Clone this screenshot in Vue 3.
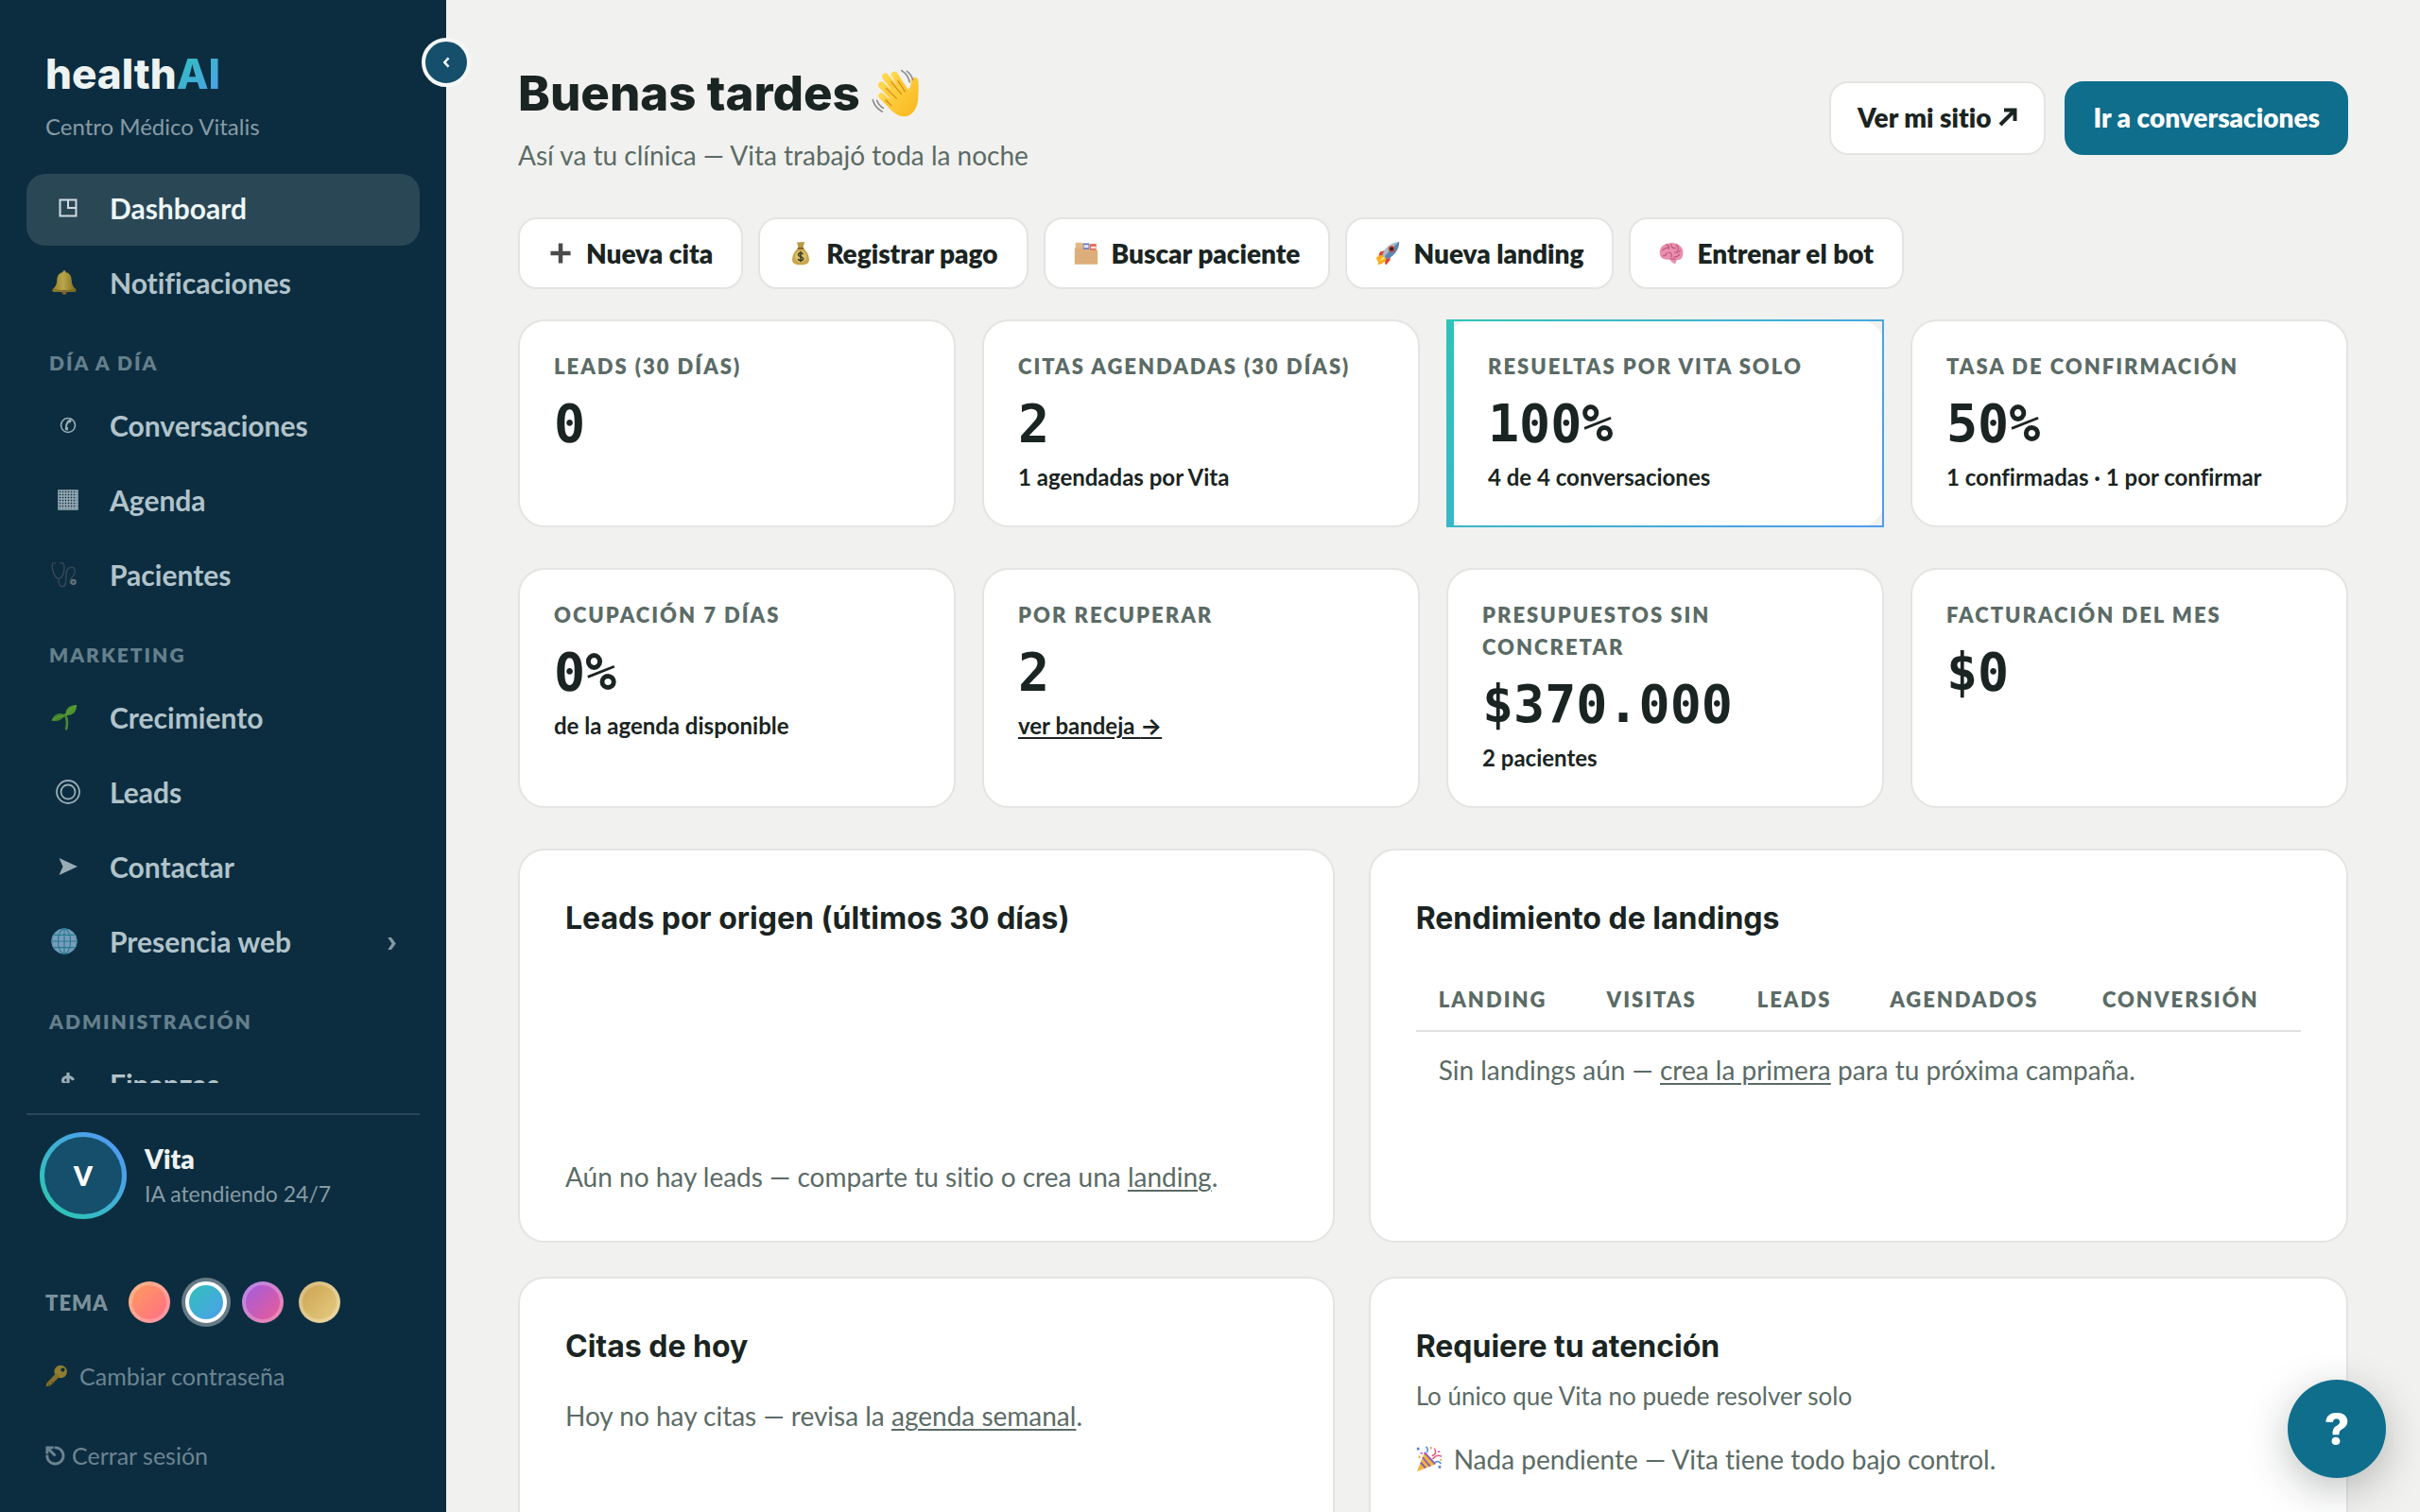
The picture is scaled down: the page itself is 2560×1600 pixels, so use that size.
<template>
  <div class="app">
    <aside class="sidebar">
      <button class="collapse" aria-label="Contraer menú">
        <svg viewBox="0 0 12 16"><path d="M9 2.500 4 8l5 5.500" /></svg>
      </button>

      <div class="brand">
        <div class="logo">health<span>AI</span></div>
        <div class="clinic">Centro Médico Vitalis</div>
      </div>

      <nav class="nav">
        <template v-for="group in navGroups" :key="group.title">
          <div v-if="group.title" class="nav-title">{{ group.title }}</div>
          <div class="nav-list">
            <a
              v-for="item in group.items"
              :key="item.label"
              href="#"
              class="nav-item"
              :class="{ active: item.label === current }"
              @click.prevent="current = item.label"
            >
              <span class="nav-icon" :class="{ emoji: item.emoji }">
                <svg viewBox="0 0 32 32" v-html="icons[item.icon]"></svg>
              </span>
              <span class="nav-label">{{ item.label }}</span>
              <svg v-if="item.more" class="chevron" viewBox="0 0 10 14"><path d="M1 1h3.500l4.500 6-4.500 6H1l4-6z" /></svg>
            </a>
          </div>
        </template>
      </nav>

      <div class="side-footer">
        <div class="agent">
          <div class="avatar">V</div>
          <div>
            <div class="agent-name">Vita</div>
            <div class="agent-state">IA atendiendo 24/7</div>
          </div>
        </div>
        <div class="themes">
          <span class="themes-label">TEMA</span>
          <button
            v-for="t in themes"
            :key="t"
            class="swatch"
            :class="[t, { selected: t === theme }]"
            :aria-label="'Tema ' + t"
            @click="theme = t"
          ></button>
        </div>
        <a href="#" class="side-link password">
          <svg class="key" viewBox="0 0 32 32" v-html="icons.key"></svg>Cambiar contraseña
        </a>
        <a href="#" class="side-link logout">
          <svg class="exit" viewBox="0 0 22 22">
            <path d="M10 2a9 9 0 1 1-8 8M2 9V2h7M2.500 2.500 11 11" />
          </svg>Cerrar sesión
        </a>
      </div>
    </aside>

    <main class="main">
      <header class="header">
        <div>
          <h1>Buenas tardes <svg class="wave" viewBox="0 0 32 32" v-html="icons.wave"></svg></h1>
          <p class="lead">Así va tu clínica — Vita trabajó toda la noche</p>
        </div>
        <div class="header-actions">
          <a href="#" class="btn">Ver mi sitio
            <svg class="arrow-ne" viewBox="0 0 20 20"><path d="M2 18 17 3M6 2.500h11.500V14" /></svg>
          </a>
          <a href="#" class="btn primary">Ir a conversaciones</a>
        </div>
      </header>

      <div class="quick">
        <button v-for="q in quickActions" :key="q.label" class="quick-btn">
          <svg viewBox="0 0 32 32" v-html="icons[q.icon]"></svg>{{ q.label }}
        </button>
      </div>

      <section v-for="(row, i) in kpis" :key="i" class="kpis">
        <div v-for="k in row" :key="k.label" class="kpi" :class="{ highlight: k.highlight }">
          <div class="kpi-label">{{ k.label }}</div>
          <div class="kpi-value">{{ k.value }}</div>
          <div v-if="k.link" class="kpi-sub"><a href="#">{{ k.link }} <span class="arrow">→</span></a></div>
          <div v-else-if="k.sub" class="kpi-sub">{{ k.sub }}</div>
        </div>
      </section>

      <section class="panels">
        <div class="panel">
          <h2>Leads por origen (últimos 30 días)</h2>
          <div class="chart"></div>
          <p class="empty">Aún no hay leads — comparte tu sitio o crea una <a href="#">landing</a>.</p>
        </div>

        <div class="panel">
          <h2>Rendimiento de landings</h2>
          <table class="landings">
            <thead>
              <tr>
                <th v-for="c in columns" :key="c" :class="c.toLowerCase()">{{ c }}</th>
              </tr>
            </thead>
            <tbody>
              <tr>
                <td colspan="5">Sin landings aún — <a href="#">crea la primera</a> para tu próxima campaña.</td>
              </tr>
            </tbody>
          </table>
        </div>

        <div class="panel low">
          <h2>Citas de hoy</h2>
          <p class="empty today">Hoy no hay citas — revisa la <a href="#">agenda semanal</a>.</p>
        </div>

        <div class="panel low">
          <h2>Requiere tu atención</h2>
          <p class="hint">Lo único que Vita no puede resolver solo</p>
          <p class="empty pending">
            <svg viewBox="0 0 32 32" v-html="icons.party"></svg>Nada pendiente — Vita tiene todo bajo control.
          </p>
        </div>
      </section>
    </main>

    <button class="help" aria-label="Ayuda">?</button>
  </div>
</template>

<script setup>
import { ref } from 'vue'

const current = ref('Dashboard')
const theme = ref('oceano')
const themes = ['coral', 'oceano', 'violeta', 'arena']

const navGroups = [
  {
    title: '',
    items: [
      { label: 'Dashboard', icon: 'dashboard' },
      { label: 'Notificaciones', icon: 'bell', emoji: true }
    ]
  },
  {
    title: 'DÍA A DÍA',
    items: [
      { label: 'Conversaciones', icon: 'phone' },
      { label: 'Agenda', icon: 'grid' },
      { label: 'Pacientes', icon: 'stethoscope', emoji: true }
    ]
  },
  {
    title: 'MARKETING',
    items: [
      { label: 'Crecimiento', icon: 'seedling', emoji: true },
      { label: 'Leads', icon: 'target' },
      { label: 'Contactar', icon: 'send' },
      { label: 'Presencia web', icon: 'globe', emoji: true, more: true }
    ]
  },
  {
    title: 'ADMINISTRACIÓN',
    items: [{ label: 'Finanzas', icon: 'dollar' }]
  }
]

const quickActions = [
  { label: 'Nueva cita', icon: 'plus' },
  { label: 'Registrar pago', icon: 'money' },
  { label: 'Buscar paciente', icon: 'folders' },
  { label: 'Nueva landing', icon: 'rocket' },
  { label: 'Entrenar el bot', icon: 'brain' }
]

const kpis = [
  [
    { label: 'LEADS (30 DÍAS)', value: '0' },
    { label: 'CITAS AGENDADAS (30 DÍAS)', value: '2', sub: '1 agendadas por Vita' },
    { label: 'RESUELTAS POR VITA SOLO', value: '100%', sub: '4 de 4 conversaciones', highlight: true },
    { label: 'TASA DE CONFIRMACIÓN', value: '50%', sub: '1 confirmadas · 1 por confirmar' }
  ],
  [
    { label: 'OCUPACIÓN 7 DÍAS', value: '0%', sub: 'de la agenda disponible' },
    { label: 'POR RECUPERAR', value: '2', link: 'ver bandeja' },
    { label: 'PRESUPUESTOS SIN CONCRETAR', value: '$370.000', sub: '2 pacientes' },
    { label: 'FACTURACIÓN DEL MES', value: '$0' }
  ]
]

const columns = ['LANDING', 'VISITAS', 'LEADS', 'AGENDADOS', 'CONVERSIÓN']

const icons = {
  dashboard: '<path d="M7.500 7.500h17v17h-17zM16 7.500V16h8.500" fill="none" stroke="currentColor" stroke-width="2"/>',
  phone: '<circle cx="16" cy="16" r="7.500" fill="none" stroke="currentColor" stroke-width="1.600"/><path d="M18.500 9.500c-3.500.5-6 5-5.500 11.500l2.800.6.4-3.200-1.300-.7c.2-1.800.9-3.300 2-4.500l1.500.4 1.600-2.600z" fill="currentColor"/>',
  grid: '<path d="M6 6h20v20H6zM9 6v20M12 6v20M15 6v20M18 6v20M21 6v20M24 6v20M6 9h20M6 12h20M6 15h20M6 18h20M6 21h20M6 24h20" fill="none" stroke="currentColor" stroke-width="1.500"/>',
  target: '<g fill="none" stroke="currentColor" stroke-width="1.800"><circle cx="16" cy="16" r="12"/><circle cx="16" cy="16" r="7.500"/></g>',
  send: '<path d="M6.500 7 26 16 6.500 25l4-9z" fill="currentColor"/>',
  dollar: '<path d="M16 4v23M21.500 12c-1-2.600-3-3.500-5.500-3.500-3 0-5.500 1.400-5.500 3.900 0 5 11.500 2.300 11.500 7.400 0 2.500-2.300 3.900-5.900 3.900-3 0-5.300-1-6-3.500" fill="none" stroke="currentColor" stroke-width="3.200"/>',
  bell: '<defs><linearGradient id="gb" x2="1"><stop stop-color="#c99a1c"/><stop offset=".45" stop-color="#f3d04f"/><stop offset="1" stop-color="#a87f10"/></linearGradient></defs><circle cx="16" cy="3" r="1.800" fill="#cdb668"/><path d="M16 3.500c5.500 0 8.500 3.500 8.800 9 .3 6 1.700 8.500 5.200 11.500 1 1.500.4 3-1 3.200H3c-1.400-.2-2-1.700-1-3.200 3.500-3 4.900-5.500 5.200-11.500.3-5.500 3.300-9 8.800-9z" fill="url(#gb)"/><path d="M3 24.500c8 2 18 2 26 0" fill="none" stroke="#8d6a10" stroke-width="1"/><circle cx="16" cy="28" r="2.800" fill="#a8702e"/>',
  stethoscope: '<g fill="none" stroke="#46525c" stroke-width="1.500" stroke-linecap="round"><path d="M5 2C2 1.500 1 3 1.500 7c.5 6 3 13 7.500 14 5-1 7-8 7-14 0-4-1.500-5.500-4.500-5"/><path d="M9 21c0 6 1 9.500 5 9.500 6 0 3-13 5-19 1.500-5 9-6 10-1 1 4-1 5-3 8-2 2-4 5-3 8"/></g><circle cx="27" cy="25" r="3.500" fill="#8b9398"/><circle cx="27" cy="25" r="1.800" fill="#4c5258"/>',
  seedling: '<path d="M17 13c3 5 3 10 1.500 17" fill="none" stroke="#5da52b" stroke-width="3" stroke-linecap="round"/><path d="M17.500 14C17 5 22 1.500 31 1c0 8-4 12.500-13.500 13z" fill="#64b52a"/><path d="M17 14c-4-4.500-13-3-16.500 6 6.500 1.500 11 .5 16.500-6z" fill="#55a325"/><path d="M18 13.500c3-4.500 6-8 12-11.500M16 14.500c-5 .3-10 2-14.500 5" stroke="#86cc4a" fill="none"/>',
  globe: '<circle cx="16" cy="16" r="15.500" fill="#9cc2e6"/><circle cx="16" cy="16" r="15" fill="none" stroke="#6db2cd"/><g fill="none" stroke="#2f95a8" stroke-width="1.300"><path d="M16 1v30M1 16h30M3.500 8.500h25M3.500 23.500h25"/><ellipse cx="16" cy="16" rx="7.500" ry="15"/></g>',
  key: '<circle cx="21.500" cy="10" r="9" fill="#d6aa2a"/><path d="m15 12 5 5L7 29.500 1 31l.5-4.500z" fill="#c4951f"/><path d="m8 24 3 3M4 27l3 3" stroke="#8e6912" stroke-width="1.500"/><circle cx="24.500" cy="7.500" r="2.800" fill="#0c2d40"/>',
  wave: '<defs><linearGradient id="gw" x2="1" y2="1"><stop stop-color="#ffd84d"/><stop offset="1" stop-color="#f9b51b"/></linearGradient></defs><g fill="none" stroke="url(#gw)" stroke-linecap="round"><path d="m6.500 17.500 8 8" stroke-width="4"/><path d="M6.500 10.500 17 21" stroke-width="4.400"/><path d="m9 5 11 13.500" stroke-width="4.400"/><path d="m15 3.800 8 13" stroke-width="4.400"/></g><path d="M12 13 21.500 9.500c1 2 1.700 3 2.500 4 1.500-2 1.600-3.500 1.800-6.300.2-2.600 4.300-2.400 4.600.4.500 4.800 0 7.500-.1 11.400-.3 7-4.500 12-9.300 11.900-4 0-7-2.500-10.500-6.400z" fill="url(#gw)"/><path d="m9.500 12.500 7 7M12.500 8l7 8.500M17 7.500l5 7.500M9 20l4 4" stroke="#d58a12" stroke-width=".7" fill="none"/><g fill="none" stroke="#8a8d8d" stroke-width="1" stroke-linecap="round"><path d="M19.500 1c2.800 1.800 4.600 4.200 5.300 7.500M23 1.500c2 1.500 3.200 3.200 3.800 5.500M.800 20c.8 3.600 2.800 6 6.200 7.800M3.500 20.500c.7 2.200 2 3.800 4.200 5"/></g>',
  plus: '<path d="M16 3v26M3 16h26" stroke="#4b4b4d" stroke-width="5.500" fill="none"/>',
  money: '<path d="M11 1.500c3 1.500 7-1 10 0L19 9h-6z" fill="#b99a48"/><path d="M13 9h6c5 4 8 10 8 15.500 0 4.500-3 6.500-11 6.500S5 29 5 24.500C5 19 8 13 13 9z" fill="#c9a64d"/><path d="M12 9.500h8" stroke="#7a5a1e" stroke-width="2"/><circle cx="16" cy="20.500" r="7.500" fill="#dcc06c"/><path d="M16 13.500v14M19 17.500c-1-2.500-6-2.200-6 .6 0 3 6.300 1.800 6.300 5 0 3-6 3-6.800.2" fill="none" stroke="#3b3a22" stroke-width="1.800"/>',
  folders: '<path d="M2 2h9l2 2h16v14H2z" fill="#e6b883"/><path d="M12 3h8v8h-8z" fill="#6878c4"/><path d="M13 5h6v4h-6z" fill="#dfe3f5"/><path d="M21 4h8v8h-8z" fill="#e75f4d"/><path d="M22 7h7v3h-7z" fill="#f9ded8"/><path d="M2 9h9l3 3h17v17.500a1 1 0 0 1-1 1H2a1 1 0 0 1-1-1V10z" fill="#ddae79"/>',
  rocket: '<path d="m6 14 7-2 1 7-8 2c-2 0-2-3 0-7z" fill="#e3412b"/><path d="m14 19 6-1-1 7-5 6c-2 0-2-6 0-12z" fill="#e3412b"/><path d="M1 22c3-4 6-3 8-4l5 5c-1 3-3 7-12 8 2-2 2-3 1-5z" fill="#ffae19"/><path d="m5 26 5-5 2 2z" fill="#fff0a0"/><path d="M9 18C12 9 20 2 31 1c0 10-7 19-16 23z" fill="#a9bccd"/><path d="M12 20C17 14 24 7 31 1c0 10-7 19-16 23z" fill="#5e87b1"/><circle cx="21" cy="10.500" r="4" fill="#d84230"/><circle cx="21" cy="10.500" r="2.500" fill="#262b36"/>',
  brain: '<path d="M1 16C0 8 7 3 13 3c8-2 16 2 18 9 1 5 0 9-3 12l-5 1-2 5-5-3-2-3C8 25 1 23 1 16z" fill="#e98fae"/><path d="M4 12c3-1 5-4 9-3M9 5c4 0 5 3 3 6M16 4c-1 4 2 6 6 5M22 5c4 2 4 6 1 9M5 19c3 1 5-1 5-4M12 15c4 0 5 2 4 6M20 15c4 1 6 0 8-3M19 21c3 0 6-1 8-4M14 23l8 1" fill="none" stroke="#bf557e" stroke-width="1.500"/>',
  party: '<path d="m10 8 14 14L1 31z" fill="#f0b73a"/><path d="m8 14 9 11M5.500 20l6 7M10 8l13 14" stroke="#8e5cc0" stroke-width="2.200" fill="none"/><path d="M19 12c5-1 6-5 3-9M20 16c4-5 8-5 11-3" fill="none" stroke="#e25d84" stroke-width="1.800"/><path d="M13 8c2-3 1-5-1-7M23 20c3-2 6-1 7 2" fill="none" stroke="#4b8ee0" stroke-width="1.800"/><g fill="#5b7fd8"><path d="M1 2h3v3H1zM27 24h3v3h-3z"/></g><g fill="#d96fc0"><path d="M5 8h3v2H5zM26 6h3v2h-3z"/></g><path d="M17 1h2v3h-2zM29 16h2v2h-2zM3 12h2v3H3z" fill="#eaa63a"/>'
}
</script>

<style>
body {
  margin: 0;
  background: #f1f1ef;
}
</style>

<style scoped>
.app {
  display: flex;
  height: 100vh;
  overflow: hidden;
  background: #f1f1ef;
  color: #1a2422;
  font-family: Lato, "Open Sans", sans-serif;
  font-size: 28px;
  font-variant-ligatures: none;
}

.app *,
.app *::before {
  box-sizing: border-box;
}

a {
  color: inherit;
}

button {
  font-family: inherit;
  color: inherit;
  cursor: pointer;
}

h1,
h2,
p {
  margin: 0;
}

/* Sidebar */
.sidebar {
  position: relative;
  flex: 0 0 472px;
  display: flex;
  flex-direction: column;
  padding: 50px 28px 0;
  background: #0c2d40;
  color: #edf3f1;
}

.collapse {
  position: absolute;
  top: 40px;
  right: -26px;
  width: 52px;
  height: 52px;
  display: flex;
  align-items: center;
  justify-content: center;
  padding: 0;
  border: 4px solid #f5f8f8;
  border-radius: 50%;
  background: #154f6b;
}

.collapse svg {
  width: 10px;
  height: 14px;
  fill: none;
  stroke: #fff;
  stroke-width: 3;
}

.brand {
  padding: 0 20px 34px;
}

.logo {
  font-family: Inter, sans-serif;
  font-size: 44px;
  font-weight: 800;
  line-height: 56px;
}

.logo span {
  background: linear-gradient(135deg, #2ec4b6, #4f9cf0);
  -webkit-background-clip: text;
  background-clip: text;
  color: transparent;
}

.clinic {
  margin-top: 12px;
  font-size: 24px;
  line-height: 32px;
  color: #879ba4;
}

.nav {
  flex: 1;
  min-height: 0;
  overflow: hidden;
}

.nav-title {
  margin: 31px 0 16px;
  padding-left: 24px;
  font-size: 21px;
  font-weight: 800;
  letter-spacing: 2px;
  line-height: 28px;
  color: #65808c;
}

.nav-list {
  display: flex;
  flex-direction: column;
  gap: 3px;
}

.nav-item {
  display: flex;
  align-items: center;
  gap: 26px;
  height: 76px;
  padding: 0 24px 5px 26px;
  border-radius: 20px;
  color: #b1c3ca;
  font-size: 30px;
  font-weight: 700;
  line-height: 40px;
  text-decoration: none;
}

.nav-item.active {
  background: #2a4756;
  color: #edf7f8;
}

.nav-icon {
  display: flex;
  justify-content: center;
  width: 36px;
  opacity: 0.85;
}

.nav-icon svg {
  width: 32px;
  height: 32px;
}

.nav-icon.emoji {
  justify-content: flex-start;
  opacity: 0.75;
}

.nav-icon.emoji svg {
  width: 28px;
  height: 28px;
}

.nav-label {
  flex: 1;
}

.chevron {
  flex: none;
  width: 11px;
  height: 15px;
  margin-top: 5px;
  fill: #8399a3;
}

.side-footer {
  margin-top: 32px;
  padding: 18px 0 44px;
  border-top: 2px solid #294859;
}

.agent {
  display: flex;
  align-items: center;
  gap: 19px;
  padding-left: 14px;
}

.avatar {
  display: flex;
  align-items: center;
  justify-content: center;
  width: 92px;
  height: 92px;
  border: 5px solid transparent;
  border-radius: 50%;
  background:
    linear-gradient(#154f6b, #154f6b) padding-box,
    linear-gradient(45deg, #2ec4b6 15%, #4f9cf0 85%) border-box;
  color: #fff;
  font-size: 28px;
  font-weight: 800;
}

.agent-name {
  font-size: 28px;
  font-weight: 800;
  line-height: 38px;
}

.agent-state {
  font-size: 23px;
  line-height: 36px;
  color: #879ba4;
}

.themes {
  display: flex;
  align-items: center;
  gap: 16px;
  margin-top: 66px;
  padding-left: 20px;
}

.themes-label {
  width: 72px;
  font-size: 22px;
  font-weight: 800;
  letter-spacing: 1px;
  color: #7b919b;
}

.swatch {
  width: 44px;
  height: 44px;
  padding: 0;
  border: 4px solid rgba(255, 255, 255, 0.25);
  border-radius: 50%;
  background-origin: border-box;
}

.swatch.selected {
  border-color: #fff;
  box-shadow: 0 0 0 4px #667b87;
}

.coral {
  background-image: linear-gradient(135deg, #ff9f5a, #ff6b8a);
}

.oceano {
  background-image: linear-gradient(135deg, #2ec4b6, #4f9cf0);
}

.violeta {
  background-image: linear-gradient(135deg, #9b5de5, #f15b8f);
}

.arena {
  background-image: linear-gradient(135deg, #c9a04e, #e8cf86);
}

.side-link {
  display: flex;
  align-items: center;
  padding-left: 20px;
  font-size: 25px;
  line-height: 32px;
  color: #6c8490;
  text-decoration: none;
}

.password {
  margin-top: 40px;
}

.logout {
  margin-top: 52px;
}

.key {
  width: 24px;
  height: 24px;
  margin-right: 12px;
  opacity: 0.65;
}

.exit {
  width: 21px;
  height: 21px;
  margin-right: 7px;
  fill: none;
  stroke: currentColor;
  stroke-width: 3;
}

/* Main */
.main {
  flex: 1;
  min-width: 0;
  padding: 68px 76px 60px;
  overflow-y: auto;
  scrollbar-width: none;
}

.header {
  display: flex;
  align-items: center;
  justify-content: space-between;
}

h1 {
  display: flex;
  align-items: center;
  gap: 12px;
  font-family: Inter, sans-serif;
  font-size: 51px;
  font-weight: 800;
  line-height: 62px;
}

.wave {
  width: 52px;
  height: 52px;
}

.lead {
  margin-top: 14px;
  line-height: 40px;
  color: #5b6b66;
}

.header-actions {
  display: flex;
  gap: 20px;
  padding-bottom: 2px;
}

.btn {
  display: flex;
  align-items: center;
  gap: 8px;
  height: 78px;
  padding: 0 28px 2px;
  border: 2px solid #e4e4e2;
  border-radius: 20px;
  background: #fff;
  font-size: 28px;
  font-weight: 800;
  text-decoration: none;
}

.btn.primary {
  border-color: #0f6e8c;
  background: #0f6e8c;
  color: #fff;
}

.arrow-ne {
  width: 20px;
  height: 20px;
  fill: none;
  stroke: currentColor;
  stroke-width: 4;
}

.quick {
  display: flex;
  gap: 16px;
  margin: 46px 0 32px;
}

.quick-btn {
  display: flex;
  align-items: center;
  gap: 14px;
  height: 76px;
  padding: 0 30px;
  border: 2px solid #e4e4e2;
  border-radius: 20px;
  background: #fff;
  font-size: 28px;
  font-weight: 800;
}

.quick-btn svg {
  width: 26px;
  height: 26px;
}

.kpis {
  display: grid;
  grid-template-columns: repeat(4, 1fr);
  gap: 28px;
  margin-bottom: 43px;
}

.kpi {
  padding: 31px 36px 34px;
  border: 2px solid #e4e4e2;
  border-radius: 28px;
  background: #fff;
}

.kpi.highlight {
  border-left-width: 8px;
  border-image: linear-gradient(135deg, #2ec4b6, #4f9cf0) 1;
}

.kpi-label {
  font-size: 22px;
  font-weight: 800;
  letter-spacing: 2px;
  line-height: 34px;
  color: #5b6b66;
}

.kpi-value {
  margin: 13px 0 10px;
  font-family: "DejaVu Sans Mono", monospace;
  font-size: 55px;
  font-weight: 700;
  line-height: 60px;
}

.kpi-sub {
  font-size: 24px;
  font-weight: 700;
  line-height: 34px;
}

.kpi-sub a,
.empty a,
.landings a {
  text-decoration-thickness: 2px;
  text-underline-offset: 3px;
}

.arrow {
  font-family: Inter, sans-serif;
}

.panels {
  display: grid;
  grid-template-columns: 1fr 1.2fr;
  gap: 36px;
}

.panel {
  padding: 52px 48px 48px;
  border: 2px solid #e4e4e2;
  border-radius: 28px;
  background: #fff;
}

.panel.low {
  min-height: 320px;
}

h2 {
  font-family: Inter, sans-serif;
  font-size: 32px;
  font-weight: 700;
  line-height: 40px;
}

.chart {
  height: 233px;
}

.empty {
  line-height: 40px;
  color: #5b6b66;
}

.today {
  margin-top: 33px;
}

.hint {
  margin: 14px 0 29px;
  font-size: 26px;
  line-height: 36px;
  color: #5b6b66;
}

.pending {
  display: flex;
  align-items: center;
  gap: 12px;
}

.pending svg {
  width: 28px;
  height: 28px;
}

.landings {
  width: 100%;
  margin-top: 32px;
  border-collapse: collapse;
  table-layout: fixed;
  color: #5b6b66;
  text-align: left;
}

.landings th {
  padding: 17px 0 15px 24px;
  border-bottom: 2px solid #e1e1df;
  font-size: 22px;
  font-weight: 800;
  letter-spacing: 2px;
  line-height: 34px;
}

.landings td {
  padding: 20px 24px;
  line-height: 40px;
}

.landing {
  width: 19%;
}

.visitas {
  width: 17%;
}

.leads {
  width: 15%;
}

.agendados {
  width: 24%;
}

.help {
  position: fixed;
  right: 36px;
  bottom: 36px;
  width: 104px;
  height: 104px;
  padding: 0;
  border: none;
  border-radius: 50%;
  background: #0f6e8c;
  box-shadow: 0 12px 44px rgba(20, 30, 30, 0.28);
  color: #fff;
  font-family: Inter, sans-serif;
  font-size: 46px;
  font-weight: 800;
}
</style>
